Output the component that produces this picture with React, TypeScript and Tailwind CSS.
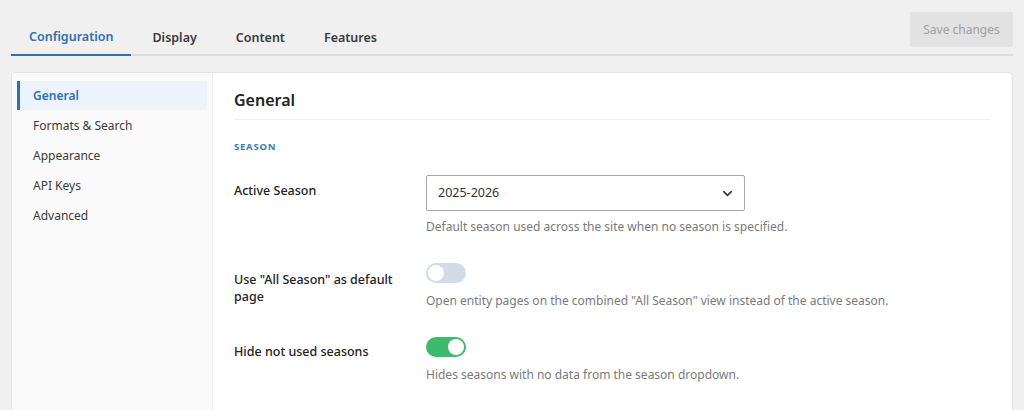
import { ChevronDown } from "lucide-react";

const tabs = ["Configuration", "Display", "Content", "Features"];
const nav = ["General", "Formats & Search", "Appearance", "API Keys", "Advanced"];

function Toggle({ on }: { on: boolean }) {
  return (
    <div
      className={`w-[40px] h-[20px] rounded-full p-[2px] flex ${on ? "bg-[#3dbb6c] justify-end" : "bg-[#d2dbe6] justify-start"}`}
    >
      <div className="w-[16px] h-[16px] rounded-full bg-white" />
    </div>
  );
}

export default function App() {
  return (
    <div
      className="w-[1024px] h-[410px] bg-[#f0f0f0] overflow-hidden text-[#1f1f1f]"
      style={{ fontFamily: '"Noto Sans", "Open Sans", sans-serif' }}
    >
      {/* top bar */}
      <div className="flex items-start px-[11px] pt-[12px]">
        <div className="flex-1 flex border-b-2 border-[#dedede] mt-[9px]">
          {tabs.map((t, i) => (
            <div
              key={t}
              className={`h-[35px] pb-[1px] flex items-center text-[12.5px] font-semibold -mb-[2px] ${
                i === 0 ? "px-[18px] text-[#2f70ad] border-b-2 border-[#2f70ad]" : "pl-[21px] pr-[18px] text-[#3a3a3a]"
              }`}
            >
              {t}
            </div>
          ))}
        </div>
        <button className="w-[103px] h-[35px] bg-[#e2e2e2] text-[#a0a0a0] text-[12px] rounded-[2px] -ml-[103px]">
          Save changes
        </button>
      </div>

      {/* card */}
      <div className="mx-[11px] mt-[16px] h-[360px] bg-white border border-[#e2e2e2] rounded-[5px] flex overflow-hidden">
        <div className="w-[201px] shrink-0 bg-[#fafafa] border-r border-[#ececec] px-[5px] pt-[8px]">
          {nav.map((n, i) => (
            <div
              key={n}
              className={`flex items-center text-[12px] ${
                i === 0
                  ? "h-[29px] mb-[1px] pl-[13px] bg-[#edf3fb] text-[#2f70ad] font-semibold border-l-[3px] border-[#2f70ad] rounded-r-[3px]"
                  : "h-[30px] pl-[16px] text-[#3a3a3a]"
              }`}
            >
              {n}
            </div>
          ))}
        </div>

        <div className="flex-1 pl-[21px] pr-[21px]">
          <div className="pt-[17px] pb-[9px] border-b border-[#ededed]">
            <h2 className="text-[16px] leading-[20px] font-semibold text-[#222]">General</h2>
          </div>
          <div className="pt-[20px] text-[9.5px] font-bold tracking-[0.08em] text-[#3a7bb5]">SEASON</div>

          <div className="flex mt-[21px]">
            <div className="w-[192px] pt-[7px] text-[12.5px] font-medium text-[#222]">Active Season</div>
            <div>
              <div className="w-[319px] h-[36px] border border-[#a8a8a8] rounded-[2px] flex items-center justify-between pl-[11px] pr-[9px] text-[12.5px] text-[#333]">
                <span>2025-2026</span>
                <ChevronDown size={15} strokeWidth={2.5} className="text-[#333]" />
              </div>
              <div className="mt-[7px] text-[12px] text-[#7a7a7a]">
                Default season used across the site when no season is specified.
              </div>
            </div>
          </div>

          <div className="flex mt-[27px]">
            <div className="w-[192px] pr-[8px] pt-[8px] text-[12.5px] font-medium text-[#222] leading-[17px]">
              Use "All Season" as default page
            </div>
            <div>
              <Toggle on={false} />
              <div className="mt-[9px] text-[12px] text-[#7a7a7a]">
                Open entity pages on the combined "All Season" view instead of the active season.
              </div>
            </div>
          </div>

          <div className="flex mt-[27px]">
            <div className="w-[192px] pt-[6px] text-[12.5px] font-medium text-[#222]">Hide not used seasons</div>
            <div>
              <Toggle on={true} />
              <div className="mt-[9px] text-[12px] text-[#7a7a7a]">
                Hides seasons with no data from the season dropdown.
              </div>
            </div>
          </div>
        </div>
      </div>
    </div>
  );
}
